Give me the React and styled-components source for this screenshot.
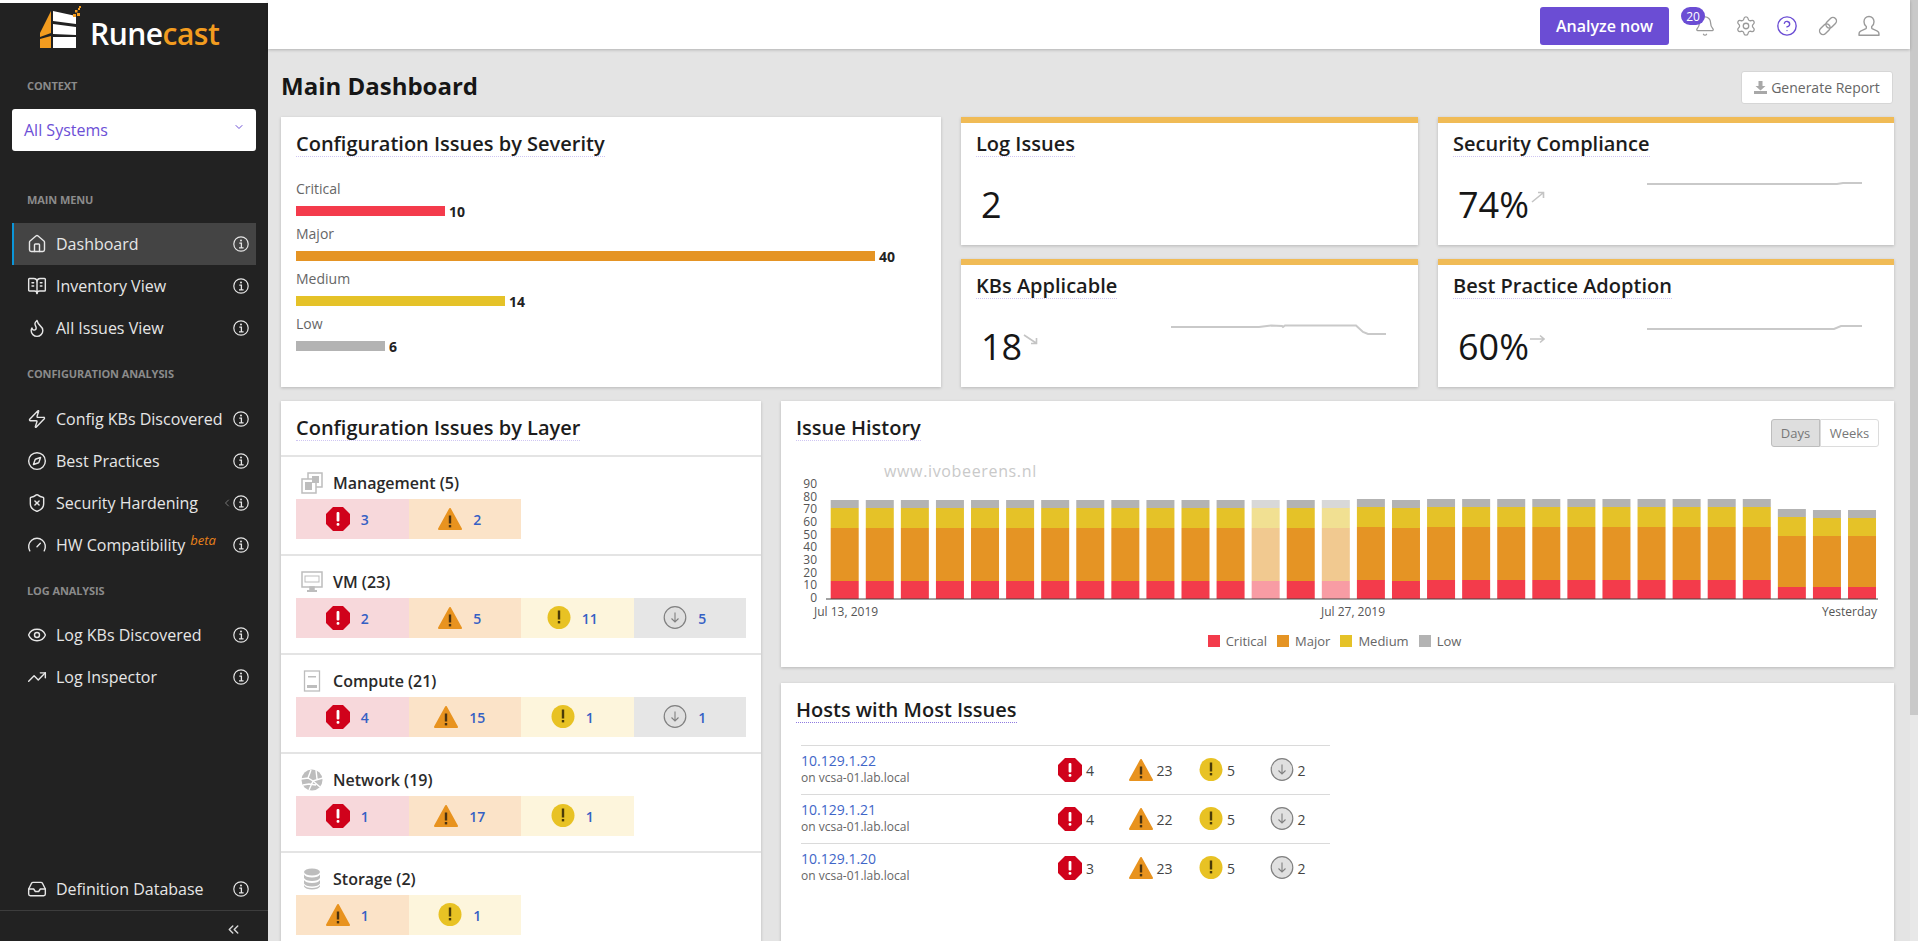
import React from "react";
import styled, { createGlobalStyle } from "styled-components";
import {
  Home, BookOpenText, Flame, Zap, Compass, ShieldX, Gauge, Eye, TrendingUp, Inbox,
  ChevronsLeft, ChevronDown, ChevronLeft, Bell, Settings, CircleHelp,
} from "lucide-react";

const Global = createGlobalStyle`
  html, body { margin: 0; padding: 0; overflow: hidden; background: #fff; }
  body { font-family: "Open Sans", "Liberation Sans", sans-serif; }
  * { box-sizing: border-box; }
`;

const Shell = styled.div`
  display: flex;
  width: 1918px;
  height: 941px;
  overflow: hidden;
`;

/* ---------- sidebar ---------- */
const Sidebar = styled.aside`
  width: 268px;
  flex: none;
  margin-top: 3px;
  background: #222222;
  display: flex;
  flex-direction: column;
  color: #e6e6e6;
`;
const LogoBlock = styled.div`
  height: 59px;
  display: flex;
  align-items: flex-start;
  padding: 3px 0 0 39px;
  gap: 9px;
`;
const LogoText = styled.div`
  font-size: 30px;
  font-weight: 600;
  letter-spacing: -0.5px;
  color: #fff;
  line-height: 40px;
  margin-top: 8px;
  span { color: #f39c1f; }
`;
const SectionLabel = styled.div`
  height: ${(p) => p.$h || 49}px;
  margin-top: ${(p) => p.$mt || 0}px;
  padding-left: 27px;
  display: flex;
  align-items: center;
  font-size: 11px;
  font-weight: 700;
  color: #8b8b8b;
  letter-spacing: -0.1px;
`;
const SelectBox = styled.div`
  height: 42px;
  margin: 0 12px;
  background: #fff;
  border-radius: 3px;
  color: #6c4fd6;
  font-size: 16px;
  display: flex;
  align-items: center;
  justify-content: space-between;
  padding: 0 11px 0 12px;
  svg { margin-top: -6px; }
`;
const NavItem = styled.div`
  height: 42px;
  margin: 0 12px;
  padding: 0 7px 0 15px;
  display: flex;
  align-items: center;
  gap: 9px;
  font-size: 16px;
  background: ${(p) => (p.$active ? "#444444" : "transparent")};
  box-shadow: ${(p) => (p.$active ? "inset 2px 0 0 #0b95d8" : "none")};
`;
const NavText = styled.span`
  flex: 1;
  white-space: nowrap;
  sup {
    font-size: 13px;
    font-style: italic;
    color: #e8811a;
    margin-left: 5px;
    line-height: 0;
  }
`;
const NavChevron = styled(ChevronLeft)`
  margin-right: -9px;
  color: #777;
`;
const NavSpacer = styled.div`
  flex: 1;
`;
const SideFooter = styled.div`
  height: 31px;
  border-top: 1px solid #3d3d3d;
  display: flex;
  align-items: center;
  justify-content: flex-end;
  padding: 6px 26px 0 0;
  color: #d8d8d8;
`;

/* ---------- main column ---------- */
const MainCol = styled.div`
  flex: 1;
  min-width: 0;
  display: flex;
  flex-direction: column;
`;
const Topbar = styled.header`
  height: 49px;
  flex: none;
  background: #fff;
  box-shadow: 0 1px 3px rgba(0, 0, 0, 0.22);
  position: relative;
  z-index: 1;
  display: flex;
  align-items: center;
  justify-content: flex-end;
  gap: 19px;
  padding: 3px 30px 0 0;
  color: #9a9a9a;
`;
const AnalyzeButton = styled.button`
  height: 38px;
  width: 129px;
  margin-right: 6px;
  border: 0;
  border-radius: 3px;
  background: #6b4dd4;
  color: #fff;
  font: 600 16px "Open Sans", sans-serif;
`;
const BellWrap = styled.div`
  position: relative;
  width: 22px;
  height: 22px;
`;
const Badge = styled.span`
  position: absolute;
  left: -13px;
  top: -8px;
  width: 24px;
  height: 18px;
  border-radius: 9px;
  background: #6b4dd4;
  color: #fff;
  font-size: 12px;
  display: flex;
  align-items: center;
  justify-content: center;
`;
const Content = styled.main`
  flex: 1;
  min-height: 0;
  overflow: hidden;
  background: #e4e4e4;
  padding: 0 16px 0 13px;
`;
const PageHead = styled.div`
  height: 68px;
  display: flex;
  align-items: center;
  justify-content: space-between;
  padding: 0 1px 0 0;
`;
const PageTitle = styled.h1`
  margin: 6px 0 0;
  font-size: 24px;
  font-weight: 700;
  line-height: 32px;
  color: #161616;
`;
const ReportButton = styled.button`
  width: 152px;
  height: 33px;
  margin-top: 8px;
  background: #fff;
  border: 1px solid #d6d6d6;
  border-radius: 3px;
  color: #666;
  font: 400 14px "Open Sans", sans-serif;
  display: flex;
  align-items: center;
  justify-content: center;
  gap: 4px;
  padding: 0;
`;
const TopGrid = styled.section`
  display: grid;
  grid-template-columns: 660px 457px 456px;
  grid-template-rows: 128px 128px;
  gap: 14px 20px;
`;
const Card = styled.div`
  background: #fff;
  box-shadow: 0 1px 3px rgba(0, 0, 0, 0.2);
  padding: 0 15px;
`;
const SeverityCard = styled(Card)`
  grid-row: span 2;
`;
const CardTitle = styled.h2`
  display: inline-block;
  margin: 14px 0 0;
  font-size: 20px;
  font-weight: 600;
  line-height: 25px;
  color: #1c1c1c;
  white-space: nowrap;
  border-bottom: 1px dotted ${(p) => p.$line || "#cfc6f2"};
`;
const SeverityList = styled.div`
  margin-top: 20px;
`;
const SeverityName = styled.div`
  height: 23px;
  line-height: 23px;
  font-size: 14px;
  color: #666;
`;
const SeverityBarRow = styled.div`
  height: 22px;
  display: flex;
  align-items: center;
  gap: 4px;
  font-size: 14px;
  font-weight: 700;
  color: #222;
`;
const SeverityBar = styled.div`
  height: 10px;
  width: ${(p) => p.$w}px;
  background: ${(p) => p.$c};
`;
const StatCard = styled(Card)`
  border-top: 6px solid #f0bb56;
  padding: 0 15px;
`;
const StatTitle = styled(CardTitle)`
  margin-top: 8px;
`;
const StatRow = styled.div`
  display: flex;
  margin-top: 30px;
  padding: 0 17px 0 5px;
  align-items: flex-start;
`;
const StatValue = styled.div`
  font-size: 36px;
  line-height: 36px;
  color: #161616;
`;
const TrendArrow = styled.svg`
  width: 15px;
  height: 12px;
  margin: 4px 0 0 1px;
  flex: none;
`;
const Spark = styled.svg`
  width: 215px;
  height: 20px;
  margin: -11px 0 0 auto;
  flex: none;
`;
const BottomGrid = styled.section`
  margin-top: 14px;
  display: grid;
  grid-template-columns: 480px 1113px;
  gap: 20px;
  align-items: start;
`;
const LayersCard = styled.div`
  background: #fff;
  box-shadow: 0 1px 3px rgba(0, 0, 0, 0.2);
`;
const LayersHead = styled.div`
  height: 54px;
  padding: 0 15px;
`;
const LayerRow = styled.div`
  height: 99px;
  border-top: 2px solid #e4e4e4;
  padding: 12px 15px 0;
`;
const LayerHead = styled.div`
  height: 30px;
  display: flex;
  align-items: center;
  gap: 10px;
  padding: 0 0 2px 5px;
  font-size: 16px;
  font-weight: 600;
  color: #2a2a2a;
`;
const CellGrid = styled.div`
  display: grid;
  grid-template-columns: repeat(4, 112.5px);
`;
const Cell = styled.div`
  height: 40px;
  background: ${(p) => p.$bg};
  display: flex;
  align-items: center;
  justify-content: center;
  gap: 11px;
  padding-right: 10px;
  font-size: 14px;
  font-weight: 600;
  color: #3560c4;
`;
const RightCol = styled.div`
  display: flex;
  flex-direction: column;
  gap: 16px;
`;
const HistoryCard = styled.div`
  position: relative;
  height: 266px;
  background: #fff;
  box-shadow: 0 1px 3px rgba(0, 0, 0, 0.2);
`;
const HistoryHead = styled.div`
  height: 75px;
  padding: 0 15px;
  display: flex;
  justify-content: space-between;
  align-items: flex-start;
`;
const Toggle = styled.div`
  margin-top: 18px;
  display: flex;
  height: 28px;
  font-size: 13px;
`;
const ToggleBtn = styled.div`
  width: ${(p) => p.$w}px;
  display: flex;
  align-items: center;
  justify-content: center;
  color: #777;
  background: ${(p) => (p.$on ? "#dedede" : "#fff")};
  border: 1px solid ${(p) => (p.$on ? "#bdbdbd" : "#dcdcdc")};
  border-radius: ${(p) => (p.$on ? "3px 0 0 3px" : "0 3px 3px 0")};
`;
const Watermark = styled.div`
  position: absolute;
  left: 103px;
  top: 59px;
  font-size: 16px;
  letter-spacing: 0.65px;
  color: #c9c9c9;
`;
const ChartSvg = styled.svg`
  display: block;
  width: 1113px;
  height: 146px;
  font-family: "Open Sans", sans-serif;
  font-size: 12px;
`;
const Legend = styled.div`
  margin-top: 10px;
  display: flex;
  justify-content: center;
  gap: 10px;
  font-size: 13px;
  color: #666;
  padding-right: 6px;
`;
const LegendItem = styled.div`
  display: flex;
  align-items: center;
  gap: 6px;
`;
const Swatch = styled.span`
  width: 12px;
  height: 12px;
  background: ${(p) => p.$c};
`;
const HostsCard = styled(Card)`
  height: 300px;
  padding: 0 20px 0 15px;
`;
const HostTable = styled.div`
  width: 529px;
  margin: 22px 0 0 5px;
`;
const HostRow = styled.div`
  height: 49px;
  border-top: 1px solid #dadada;
  display: grid;
  grid-template-columns: 257px repeat(4, 70.5px);
  align-items: center;
`;
const HostName = styled.div`
  font-size: 12px;
  line-height: 17px;
  color: #666;
  padding-bottom: 3px;
  a { display: block; font-size: 14px; color: #3f66c8; }
`;
const HostIssue = styled.div`
  display: flex;
  align-items: center;
  gap: 4px;
  font-size: 14px;
  color: #444;
`;
const ScrollTrack = styled.div`
  width: 8px;
  flex: none;
  background: #e8e8e8;
`;
const ScrollThumb = styled.div`
  height: 715px;
  background: #c9c9c9;
`;

/* ---------- drawn icons ---------- */
const Crit = () => (
  <svg width="24" height="24" viewBox="0 0 24 24">
    <polygon points="7,0 17,0 24,7 24,17 17,24 7,24 0,17 0,7" fill="#d0021b" />
    <rect x="10.6" y="5" width="2.8" height="9.5" rx="1" fill="#fff" />
    <rect x="10.6" y="16" width="2.8" height="2.8" rx="1" fill="#fff" />
  </svg>
);
const Maj = () => (
  <svg width="24" height="24" viewBox="0 0 24 24">
    <polygon points="12,2 23,22 1,22" fill="#e8931f" stroke="#e8931f" strokeWidth="2" strokeLinejoin="round" />
    <rect x="10.8" y="8.5" width="2.4" height="8" fill="#4a3210" />
    <rect x="10.8" y="18" width="2.4" height="2.4" fill="#4a3210" />
  </svg>
);
const Med = () => (
  <svg width="24" height="24" viewBox="0 0 24 24">
    <circle cx="12" cy="11.5" r="11.5" fill="#e8c224" />
    <rect x="10.8" y="4.5" width="2.4" height="9" fill="#4a3b08" />
    <rect x="10.8" y="15" width="2.4" height="2.4" fill="#4a3b08" />
  </svg>
);
const Low = () => (
  <svg width="24" height="24" viewBox="0 0 24 24" fill="none">
    <circle cx="12" cy="11.5" r="10.8" fill="#e0e0e0" stroke="#808080" strokeWidth="1.2" />
    <path d="M12 6.5v9M8.5 12.5l3.5 3.5 3.5-3.5" stroke="#808080" strokeWidth="1.1" />
  </svg>
);
const ICONS = { crit: Crit, maj: Maj, med: Med, low: Low };
const CELL_BG = { crit: "#f7d8db", maj: "#fbe3c8", med: "#fdf5dc", low: "#e6e6e6" };

const G = "#bdbdbd";
const MgmtIcon = () => (
  <svg width="22" height="22" viewBox="0 0 22 22" fill="none" stroke={G} strokeWidth="1.5">
    <rect x="7" y="1" width="14" height="14" />
    <rect x="1" y="7" width="14" height="14" fill="#fff" />
    <rect x="4" y="10" width="7" height="8" fill={G} stroke="none" />
    <rect x="11" y="4" width="7" height="7" fill={G} stroke="none" />
  </svg>
);
const VmIcon = () => (
  <svg width="22" height="22" viewBox="0 0 22 22" fill="none" stroke={G} strokeWidth="1.5">
    <rect x="1" y="1" width="20" height="15" />
    <rect x="4" y="5" width="14" height="6" strokeWidth="1" />
    <rect x="9" y="16" width="4" height="3" fill={G} />
    <rect x="6" y="19" width="10" height="2" fill={G} stroke="none" />
  </svg>
);
const ComputeIcon = () => (
  <svg width="22" height="22" viewBox="0 0 22 22" fill="none" stroke={G} strokeWidth="1.3">
    <rect x="3.5" y="1" width="15" height="20" />
    <rect x="7" y="6" width="8" height="1.5" fill={G} stroke="none" />
    <rect x="6" y="15" width="10" height="3" fill={G} stroke="none" />
  </svg>
);
const NetworkIcon = () => (
  <svg width="22" height="22" viewBox="0 0 22 22" fill="none">
    <circle cx="11" cy="11" r="10.5" fill={G} />
    <path d="M0 10L7 9L12 12L22 9M7 9L10 1M12 12L8 21M12 12L19 18M15 1L16 10M2 16L8 15L15 16" stroke="#fff" strokeWidth="1.4" />
  </svg>
);
const StorageIcon = () => (
  <svg width="22" height="22" viewBox="0 0 22 22" fill={G}>
    <ellipse cx="11" cy="4" rx="8" ry="3.5" />
    <path d="M3 6.5c1 2 4 3 8 3s7-1 8-3v3.500c-1 2-4 3-8 3s-7-1-8-3zM3 12c1 2 4 3 8 3s7-1 8-3v3.500c-1 2-4 3-8 3s-7-1-8-3zM3 17c1 2 4 3 8 3s7-1 8-3v1.500c-1 2-4 3-8 3s-7-1-8-3z" />
  </svg>
);
const Logo = () => (
  <svg width="42" height="42" viewBox="0 0 42 42">
    <polygon points="1,27 12,5 12,27 1,31" fill="#f39c1f" />
    <polygon points="1,33 12,30 12,42 1,42" fill="#f39c1f" />
    <polygon points="14,5 37,10 37,18 14,15" fill="#fff" />
    <polygon points="14,18 37,21 37,29 14,28" fill="#fff" />
    <polygon points="14,31 37,31 37,42 14,42" fill="#fff" />
    <g fill="#f39c1f">
      <rect x="34" y="8" width="3" height="3" />
      <rect x="38" y="7" width="3" height="3" />
      <rect x="36" y="4" width="2.5" height="2.5" />
      <rect x="39" y="2" width="2" height="2" />
      <rect x="40" y="0" width="2" height="2" />
    </g>
  </svg>
);
const TrayIcon = () => (
  <svg width="13" height="13" viewBox="0 0 13 13" fill="#a8a8a8">
    <path d="M4.5 0h4v5h3l-5 4.500L1.500 5h3z" />
    <rect x="0" y="10" width="13" height="3" />
  </svg>
);
const InfoGlyph = () => (
  <svg width="16" height="16" viewBox="0 0 16 16" fill="none" stroke="#e6e6e6">
    <circle cx="8" cy="8" r="7.2" strokeWidth="1.2" />
    <circle cx="8" cy="4.6" r="1" fill="#e6e6e6" stroke="none" />
    <path d="M6.300 7.200H8.400V11.600M6 11.800H10.600" strokeWidth="1.3" />
  </svg>
);
const ChainIcon = () => (
  <svg width="22" height="22" viewBox="0 0 22 22" fill="none" stroke="#9a9a9a" strokeWidth="1.4">
    <g transform="rotate(-45 11 11)">
      <rect x="0.500" y="7.500" width="12" height="7" rx="3.500" />
      <rect x="9.500" y="7.500" width="12" height="7" rx="3.500" />
    </g>
  </svg>
);
const BustIcon = () => (
  <svg width="22" height="22" viewBox="0 0 22 22" fill="none" stroke="#9a9a9a" strokeWidth="1.4" strokeLinejoin="round">
    <path d="M11 1.500c-3 0-5 2.200-5 5.200 0 2 .9 3.800 2.300 4.800v1.700c0 .8-5.800 2.300-6.800 4-.4.700-.5 2-.5 3h20c0-1-.1-2.300-.5-3-1-1.700-6.800-3.200-6.800-4v-1.700C15.100 10.500 16 8.700 16 6.700c0-3-2-5.200-5-5.200z" />
  </svg>
);

/* ---------- data ---------- */
const navMain = [
  { I: Home, t: "Dashboard", active: true },
  { I: BookOpenText, t: "Inventory View" },
  { I: Flame, t: "All Issues View" },
];
const navConfig = [
  { I: Zap, t: "Config KBs Discovered" },
  { I: Compass, t: "Best Practices" },
  { I: ShieldX, t: "Security Hardening", chev: true },
  { I: Gauge, t: "HW Compatibility", beta: true },
];
const navLog = [
  { I: Eye, t: "Log KBs Discovered" },
  { I: TrendingUp, t: "Log Inspector" },
];
const severities = [
  { n: "Critical", w: 149, c: "#f43b4c", v: 10 },
  { n: "Major", w: 579, c: "#e59424", v: 40 },
  { n: "Medium", w: 209, c: "#e5c228", v: 14 },
  { n: "Low", w: 89, c: "#b3b3b3", v: 6 },
];
const layers = [
  { n: "Management (5)", I: MgmtIcon, c: [["crit", 3], ["maj", 2]] },
  { n: "VM (23)", I: VmIcon, c: [["crit", 2], ["maj", 5], ["med", 11], ["low", 5]] },
  { n: "Compute (21)", I: ComputeIcon, c: [["crit", 4], ["maj", 15], ["med", 1], ["low", 1]] },
  { n: "Network (19)", I: NetworkIcon, c: [["crit", 1], ["maj", 17], ["med", 1]] },
  { n: "Storage (2)", I: StorageIcon, c: [["maj", 1], ["med", 1]] },
];
const hosts = [
  { ip: "10.129.1.22", v: [4, 23, 5, 2] },
  { ip: "10.129.1.21", v: [4, 22, 5, 2] },
  { ip: "10.129.1.20", v: [3, 23, 5, 2] },
];
const A = [500, 508, 528, 581];
const B = [499, 507, 527, 580];
const C = [509, 517, 536, 587];
const D = [510, 518, 536, 587];
const barProfile = (i) => {
  if (i < 15 || i === 16) return A;
  if (i < 27) return B;
  if (i === 27) return C;
  return D;
};
const ORIGIN_X = 781;
const ORIGIN_Y = 476;
const BASE = 599;

const Chart = () => (
  <ChartSvg viewBox="0 0 1113 146">
    {[90, 80, 70, 60, 50, 40, 30, 20, 10, 0].map((v, i) => (
      <text key={v} x={36} y={484 + i * 12.67 - ORIGIN_Y + 4} textAnchor="end" fill="#555">{v}</text>
    ))}
    {Array.from({ length: 30 }, (_, i) => {
      const x = 830.7 + i * 35.08 - ORIGIN_X;
      const [g, y, o, r] = barProfile(i);
      const seg = (a, b, c) => <rect x={x} y={a - ORIGIN_Y} width={28} height={b - a} fill={c} />;
      return (
        <g key={i} opacity={i === 12 || i === 14 ? 0.5 : 1}>
          {seg(g, y, "#b3b3b3")}
          {seg(y, o, "#e5c228")}
          {seg(o, r, "#e59424")}
          {seg(r, BASE, "#f33b4b")}
        </g>
      );
    })}
    <line x1={45} x2={1097} y1={BASE - ORIGIN_Y} y2={BASE - ORIGIN_Y} stroke="#444" strokeWidth="1" />
    <text x={33} y={140} fill="#555">Jul 13, 2019</text>
    <text x={572} y={140} fill="#555" textAnchor="middle">Jul 27, 2019</text>
    <text x={1096} y={140} fill="#555" textAnchor="end">Yesterday</text>
  </ChartSvg>
);

const Sparkline = ({ d }) => (
  <Spark viewBox="0 0 215 20" fill="none">
    <path d={d} stroke="#c9c9c9" strokeWidth="2" />
  </Spark>
);
const Arrow = ({ d }) => (
  <TrendArrow viewBox="0 0 15 12" fill="none">
    <path d={d} stroke="#c4c4c4" strokeWidth="1.6" />
  </TrendArrow>
);
const UP = "M2 11L13 2M8 1.5h5.5V7";
const DOWN = "M1 2l12 8M13.5 5v5.5H8";
const FLAT = "M0 6h14M10 2.5L14 6l-4 3.500";

const Nav = ({ items }) =>
  items.map(({ I, t, active, chev, beta }) => (
    <NavItem key={t} $active={active}>
      <I size={20} strokeWidth={1.7} />
      <NavText>
        {t}
        {beta && <sup>beta</sup>}
      </NavText>
      {chev && <NavChevron size={12} />}
      <InfoGlyph />
    </NavItem>
  ));

export default function App() {
  return (
    <Shell>
      <Global />
      <Sidebar>
        <LogoBlock>
          <Logo />
          <LogoText>Rune<span>cast</span></LogoText>
        </LogoBlock>
        <SectionLabel $h={47}>CONTEXT</SectionLabel>
        <SelectBox>
          All Systems
          <ChevronDown size={12} color="#6c4fd6" />
        </SelectBox>
        <SectionLabel $mt={24} $h={48}>MAIN MENU</SectionLabel>
        <Nav items={navMain} />
        <SectionLabel>CONFIGURATION ANALYSIS</SectionLabel>
        <Nav items={navConfig} />
        <SectionLabel $h={48}>LOG ANALYSIS</SectionLabel>
        <Nav items={navLog} />
        <NavSpacer />
        <Nav items={[{ I: Inbox, t: "Definition Database" }]} />
        <SideFooter><ChevronsLeft size={17} /></SideFooter>
      </Sidebar>

      <MainCol>
        <Topbar>
          <AnalyzeButton>Analyze now</AnalyzeButton>
          <BellWrap>
            <Bell size={22} strokeWidth={1.4} />
            <Badge>20</Badge>
          </BellWrap>
          <Settings size={22} strokeWidth={1.4} />
          <CircleHelp size={22} strokeWidth={1.5} color="#6b4dd4" />
          <ChainIcon />
          <BustIcon />
        </Topbar>

        <Content>
          <PageHead>
            <PageTitle>Main Dashboard</PageTitle>
            <ReportButton><TrayIcon /> Generate Report</ReportButton>
          </PageHead>

          <TopGrid>
            <SeverityCard>
              <CardTitle>Configuration Issues by Severity</CardTitle>
              <SeverityList>
                {severities.map((s) => (
                  <div key={s.n}>
                    <SeverityName>{s.n}</SeverityName>
                    <SeverityBarRow>
                      <SeverityBar $w={s.w} $c={s.c} />
                      {s.v}
                    </SeverityBarRow>
                  </div>
                ))}
              </SeverityList>
            </SeverityCard>

            <StatCard>
              <StatTitle>Log Issues</StatTitle>
              <StatRow><StatValue>2</StatValue></StatRow>
            </StatCard>
            <StatCard>
              <StatTitle>Security Compliance</StatTitle>
              <StatRow>
                <StatValue>74%</StatValue>
                <Arrow d={UP} />
                <Sparkline d="M0 8H190L196 7H215" />
              </StatRow>
            </StatCard>
            <StatCard>
              <StatTitle>KBs Applicable</StatTitle>
              <StatRow>
                <StatValue>18</StatValue>
                <Arrow d={DOWN} />
                <Sparkline d="M0 9H88L100 7.5L111 8L112 9L114 7.5H185L192 14L197 16H215" />
              </StatRow>
            </StatCard>
            <StatCard>
              <StatTitle>Best Practice Adoption</StatTitle>
              <StatRow>
                <StatValue>60%</StatValue>
                <Arrow d={FLAT} />
                <Sparkline d="M0 11H187L194 8H215" />
              </StatRow>
            </StatCard>
          </TopGrid>

          <BottomGrid>
            <LayersCard>
              <LayersHead><CardTitle>Configuration Issues by Layer</CardTitle></LayersHead>
              {layers.map(({ n, I, c }) => (
                <LayerRow key={n}>
                  <LayerHead><I />{n}</LayerHead>
                  <CellGrid>
                    {c.map(([k, v]) => {
                      const Ic = ICONS[k];
                      return <Cell key={k} $bg={CELL_BG[k]}><Ic />{v}</Cell>;
                    })}
                  </CellGrid>
                </LayerRow>
              ))}
            </LayersCard>

            <RightCol>
              <HistoryCard>
                <HistoryHead>
                  <CardTitle>Issue History</CardTitle>
                  <Toggle>
                    <ToggleBtn $on $w={49}>Days</ToggleBtn>
                    <ToggleBtn $w={59}>Weeks</ToggleBtn>
                  </Toggle>
                </HistoryHead>
                <Watermark>www.ivobeerens.nl</Watermark>
                <Chart />
                <Legend>
                  <LegendItem><Swatch $c="#f33b4b" />Critical</LegendItem>
                  <LegendItem><Swatch $c="#e59424" />Major</LegendItem>
                  <LegendItem><Swatch $c="#e5c228" />Medium</LegendItem>
                  <LegendItem><Swatch $c="#b3b3b3" />Low</LegendItem>
                </Legend>
              </HistoryCard>

              <HostsCard>
                <CardTitle $line="#8f7be0">Hosts with Most Issues</CardTitle>
                <HostTable>
                  {hosts.map((h) => (
                    <HostRow key={h.ip}>
                      <HostName><a>{h.ip}</a>on vcsa-01.lab.local</HostName>
                      {["crit", "maj", "med", "low"].map((k, i) => {
                        const Ic = ICONS[k];
                        return <HostIssue key={k}><Ic />{h.v[i]}</HostIssue>;
                      })}
                    </HostRow>
                  ))}
                </HostTable>
              </HostsCard>
            </RightCol>
          </BottomGrid>
        </Content>
      </MainCol>

      <ScrollTrack><ScrollThumb /></ScrollTrack>
    </Shell>
  );
}
